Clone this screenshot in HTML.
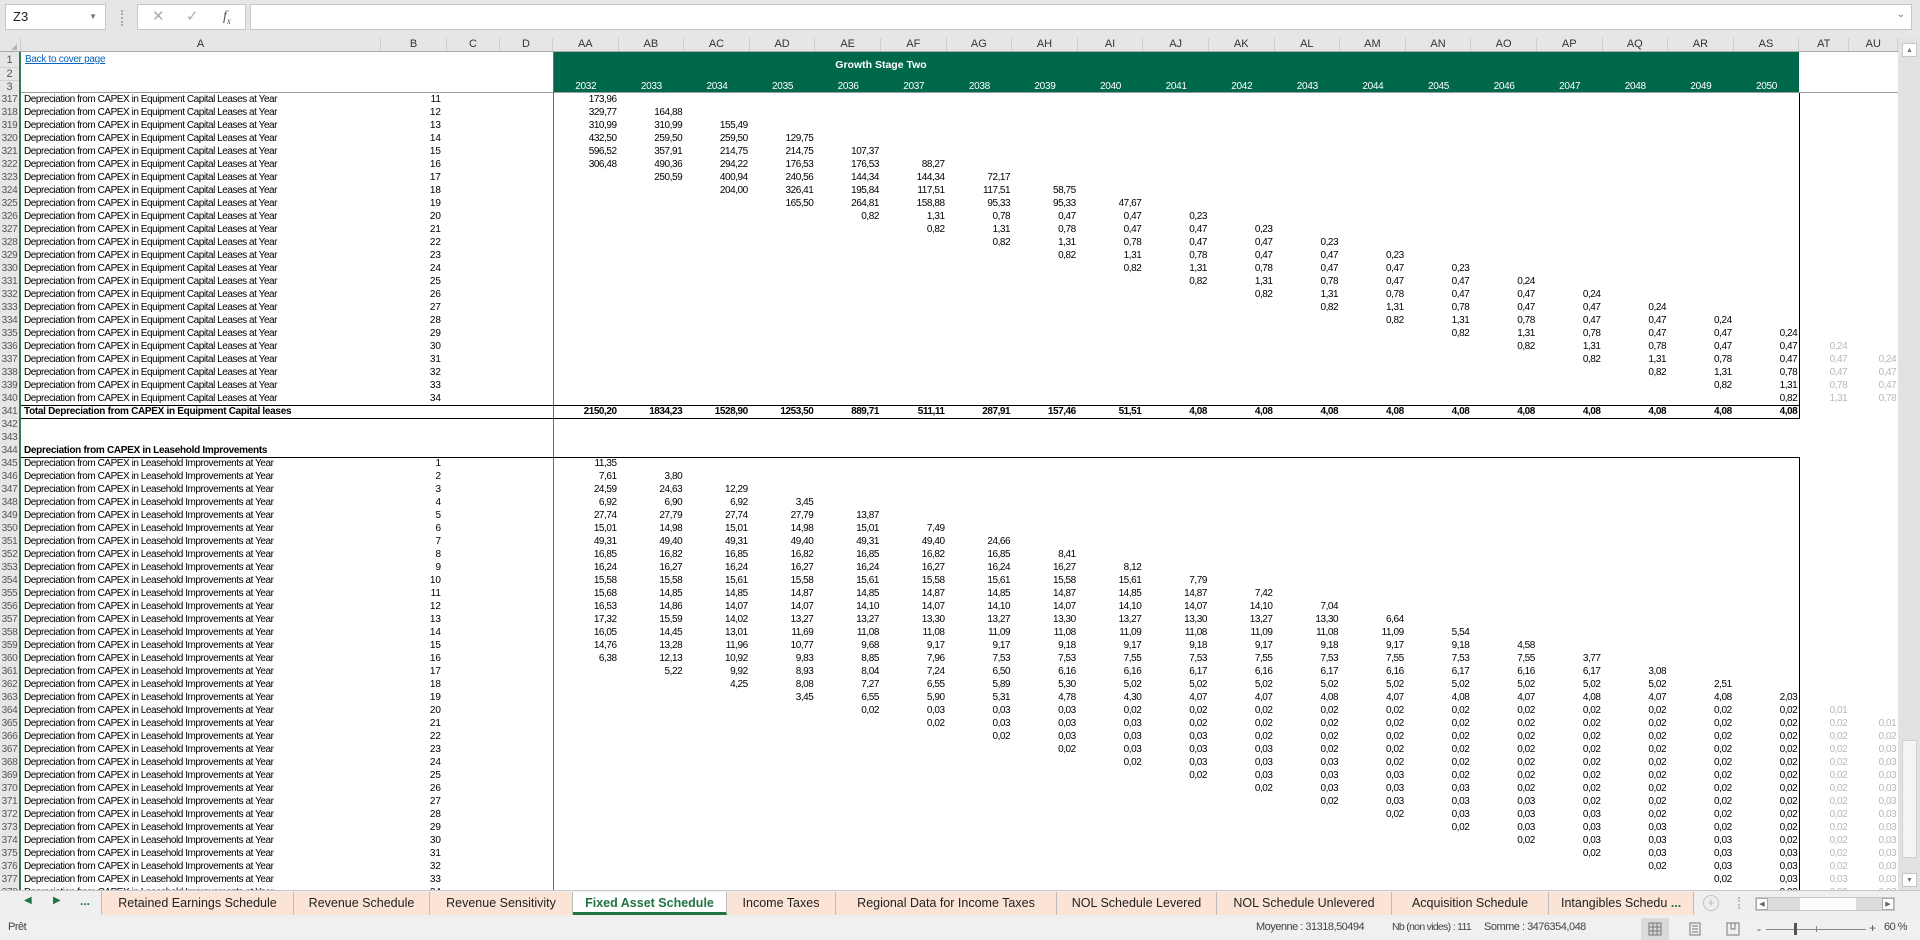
<!DOCTYPE html>
<html><head><meta charset="utf-8"><style>
*{box-sizing:border-box;margin:0;padding:0}
body{width:1920px;height:940px;overflow:hidden;background:#fff;font-family:"Liberation Sans",Arial,sans-serif;position:relative;color:#000}
.abs{position:absolute}
.tb{left:0;top:0;width:1920px;height:38px;background:#e6e6e6}
.box{position:absolute;background:#fff;border:1px solid #c6c6c6}
.g2{display:grid;grid-template-columns:21px 360px 66px 53px 53px repeat(19,65.6px) 50px 49px}
.ch{position:absolute;left:0;top:38px;height:14px;width:1898px;background:#e6e6e6;border-bottom:1px solid #a8a8a8;font-size:11px;color:#333;line-height:13px}
.ch>div{text-align:center;border-right:1px solid #cdcdcd}
#rows{position:absolute;left:0;top:93px;width:1898px}
.r{height:13px;line-height:13px;font-size:10px;white-space:nowrap}
.r>b{background:#e6e6e6;color:#555;text-align:center;font-weight:normal;font-size:10px;letter-spacing:-.3px;border-right:2px solid #2f7a4f;border-bottom:1px solid #d6d6d6;grid-column:1}
.r>a{grid-column:2;padding-left:3px;letter-spacing:-.45px;overflow:visible;color:#000;text-decoration:none}
.r>em{grid-column:3;font-style:normal;text-align:right;padding-right:6px}
.r>span{text-align:right;padding-right:2px;letter-spacing:-.45px}
.r .g{color:#b8b8b8}
.bd{font-weight:bold}
.tab{position:absolute;top:892px;height:23px;line-height:22px;background:#fbe4d6;border-right:1px solid #bdbdbd;font-size:12.5px;color:#222;text-align:center;white-space:nowrap;overflow:hidden}
.st{position:absolute;top:921px;font-size:11px;color:#444;white-space:nowrap;letter-spacing:-.5px}
.g2 i{font-style:normal}
</style></head><body>
<div class="abs tb"></div>
<div class="box" style="left:5px;top:4px;width:101px;height:26px;font-size:13px;line-height:24px;padding-left:7px;color:#222">Z3<span style="position:absolute;right:8px;top:0;font-size:8px;color:#777">▼</span></div>
<div class="abs" style="left:121px;top:10px;width:2px;height:16px;border-left:2px dotted #aaa"></div>
<div class="box" style="left:137px;top:4px;width:109px;height:26px;font-size:15px;line-height:24px;color:#aaa"><span class="abs" style="left:14px">✕</span><span class="abs" style="left:48px">✓</span><span class="abs" style="left:85px;font-family:'Liberation Serif',serif;font-style:italic;color:#555;font-size:14px">f<sub style="font-size:9px">x</sub></span></div>
<div class="box" style="left:250px;top:4px;width:1662px;height:26px"><span class="abs" style="right:6px;top:4px;font-size:10px;color:#666">⌄</span></div>

<div class="ch g2"><div style="position:relative"><span class="abs" style="right:3px;bottom:1px;width:0;height:0;border-left:6px solid transparent;border-bottom:6px solid #b5b5b5"></span></div><div>A</div><div>B</div><div>C</div><div>D</div><div>AA</div><div>AB</div><div>AC</div><div>AD</div><div>AE</div><div>AF</div><div>AG</div><div>AH</div><div>AI</div><div>AJ</div><div>AK</div><div>AL</div><div>AM</div><div>AN</div><div>AO</div><div>AP</div><div>AQ</div><div>AR</div><div>AS</div><div>AT</div><div>AU</div></div>

<div class="abs" style="left:0;top:52px;width:21px;height:41px;background:#e6e6e6;border-right:2px solid #2f7a4f;font-size:11px;color:#555;text-align:center">
<div style="height:16px;line-height:17px;border-bottom:1px solid #d0d0d0">1</div><div style="height:13px;line-height:13px;border-bottom:1px solid #d0d0d0">2</div><div style="height:12px;line-height:12px">3</div></div>
<div class="abs" style="left:25px;top:54px;font-size:10px;color:#0563c1;text-decoration:underline;letter-spacing:-.3px">Back to cover page</div>
<div class="abs" style="left:553px;top:52px;width:1246px;height:41px;background:#00684a"></div>
<div class="abs" style="left:553px;top:59px;width:656px;text-align:center;color:#fff;font-weight:bold;font-size:10.5px">Growth Stage Two</div>
<div class="abs g2" style="left:0;top:81px;width:1898px;color:#fff;font-size:10px;letter-spacing:-.3px;text-align:center"><i style="grid-column:6">2032</i><i>2033</i><i>2034</i><i>2035</i><i>2036</i><i>2037</i><i>2038</i><i>2039</i><i>2040</i><i>2041</i><i>2042</i><i>2043</i><i>2044</i><i>2045</i><i>2046</i><i>2047</i><i>2048</i><i>2049</i><i>2050</i></div>

<div id="rows">
<div class="r g2"><b>317</b><a>Depreciation from CAPEX in Equipment Capital Leases at Year</a><em>11</em><span style="grid-column:6">173,96</span></div>
<div class="r g2"><b>318</b><a>Depreciation from CAPEX in Equipment Capital Leases at Year</a><em>12</em><span style="grid-column:6">329,77</span><span>164,88</span></div>
<div class="r g2"><b>319</b><a>Depreciation from CAPEX in Equipment Capital Leases at Year</a><em>13</em><span style="grid-column:6">310,99</span><span>310,99</span><span>155,49</span></div>
<div class="r g2"><b>320</b><a>Depreciation from CAPEX in Equipment Capital Leases at Year</a><em>14</em><span style="grid-column:6">432,50</span><span>259,50</span><span>259,50</span><span>129,75</span></div>
<div class="r g2"><b>321</b><a>Depreciation from CAPEX in Equipment Capital Leases at Year</a><em>15</em><span style="grid-column:6">596,52</span><span>357,91</span><span>214,75</span><span>214,75</span><span>107,37</span></div>
<div class="r g2"><b>322</b><a>Depreciation from CAPEX in Equipment Capital Leases at Year</a><em>16</em><span style="grid-column:6">306,48</span><span>490,36</span><span>294,22</span><span>176,53</span><span>176,53</span><span>88,27</span></div>
<div class="r g2"><b>323</b><a>Depreciation from CAPEX in Equipment Capital Leases at Year</a><em>17</em><span style="grid-column:7">250,59</span><span>400,94</span><span>240,56</span><span>144,34</span><span>144,34</span><span>72,17</span></div>
<div class="r g2"><b>324</b><a>Depreciation from CAPEX in Equipment Capital Leases at Year</a><em>18</em><span style="grid-column:8">204,00</span><span>326,41</span><span>195,84</span><span>117,51</span><span>117,51</span><span>58,75</span></div>
<div class="r g2"><b>325</b><a>Depreciation from CAPEX in Equipment Capital Leases at Year</a><em>19</em><span style="grid-column:9">165,50</span><span>264,81</span><span>158,88</span><span>95,33</span><span>95,33</span><span>47,67</span></div>
<div class="r g2"><b>326</b><a>Depreciation from CAPEX in Equipment Capital Leases at Year</a><em>20</em><span style="grid-column:10">0,82</span><span>1,31</span><span>0,78</span><span>0,47</span><span>0,47</span><span>0,23</span></div>
<div class="r g2"><b>327</b><a>Depreciation from CAPEX in Equipment Capital Leases at Year</a><em>21</em><span style="grid-column:11">0,82</span><span>1,31</span><span>0,78</span><span>0,47</span><span>0,47</span><span>0,23</span></div>
<div class="r g2"><b>328</b><a>Depreciation from CAPEX in Equipment Capital Leases at Year</a><em>22</em><span style="grid-column:12">0,82</span><span>1,31</span><span>0,78</span><span>0,47</span><span>0,47</span><span>0,23</span></div>
<div class="r g2"><b>329</b><a>Depreciation from CAPEX in Equipment Capital Leases at Year</a><em>23</em><span style="grid-column:13">0,82</span><span>1,31</span><span>0,78</span><span>0,47</span><span>0,47</span><span>0,23</span></div>
<div class="r g2"><b>330</b><a>Depreciation from CAPEX in Equipment Capital Leases at Year</a><em>24</em><span style="grid-column:14">0,82</span><span>1,31</span><span>0,78</span><span>0,47</span><span>0,47</span><span>0,23</span></div>
<div class="r g2"><b>331</b><a>Depreciation from CAPEX in Equipment Capital Leases at Year</a><em>25</em><span style="grid-column:15">0,82</span><span>1,31</span><span>0,78</span><span>0,47</span><span>0,47</span><span>0,24</span></div>
<div class="r g2"><b>332</b><a>Depreciation from CAPEX in Equipment Capital Leases at Year</a><em>26</em><span style="grid-column:16">0,82</span><span>1,31</span><span>0,78</span><span>0,47</span><span>0,47</span><span>0,24</span></div>
<div class="r g2"><b>333</b><a>Depreciation from CAPEX in Equipment Capital Leases at Year</a><em>27</em><span style="grid-column:17">0,82</span><span>1,31</span><span>0,78</span><span>0,47</span><span>0,47</span><span>0,24</span></div>
<div class="r g2"><b>334</b><a>Depreciation from CAPEX in Equipment Capital Leases at Year</a><em>28</em><span style="grid-column:18">0,82</span><span>1,31</span><span>0,78</span><span>0,47</span><span>0,47</span><span>0,24</span></div>
<div class="r g2"><b>335</b><a>Depreciation from CAPEX in Equipment Capital Leases at Year</a><em>29</em><span style="grid-column:19">0,82</span><span>1,31</span><span>0,78</span><span>0,47</span><span>0,47</span><span>0,24</span></div>
<div class="r g2"><b>336</b><a>Depreciation from CAPEX in Equipment Capital Leases at Year</a><em>30</em><span style="grid-column:20">0,82</span><span>1,31</span><span>0,78</span><span>0,47</span><span>0,47</span><span class="g">0,24</span></div>
<div class="r g2"><b>337</b><a>Depreciation from CAPEX in Equipment Capital Leases at Year</a><em>31</em><span style="grid-column:21">0,82</span><span>1,31</span><span>0,78</span><span>0,47</span><span class="g">0,47</span><span class="g">0,24</span></div>
<div class="r g2"><b>338</b><a>Depreciation from CAPEX in Equipment Capital Leases at Year</a><em>32</em><span style="grid-column:22">0,82</span><span>1,31</span><span>0,78</span><span class="g">0,47</span><span class="g">0,47</span></div>
<div class="r g2"><b>339</b><a>Depreciation from CAPEX in Equipment Capital Leases at Year</a><em>33</em><span style="grid-column:23">0,82</span><span>1,31</span><span class="g">0,78</span><span class="g">0,47</span></div>
<div class="r g2"><b>340</b><a>Depreciation from CAPEX in Equipment Capital Leases at Year</a><em>34</em><span style="grid-column:24">0,82</span><span class="g">1,31</span><span class="g">0,78</span></div>
<div class="r g2 bd"><b>341</b><a style="letter-spacing:-.3px">Total Depreciation from CAPEX in Equipment Capital leases</a><span style="grid-column:6">2150,20</span><span>1834,23</span><span>1528,90</span><span>1253,50</span><span>889,71</span><span>511,11</span><span>287,91</span><span>157,46</span><span>51,51</span><span>4,08</span><span>4,08</span><span>4,08</span><span>4,08</span><span>4,08</span><span>4,08</span><span>4,08</span><span>4,08</span><span>4,08</span><span>4,08</span></div>
<div class="r g2"><b>342</b></div>
<div class="r g2"><b>343</b></div>
<div class="r g2 bd"><b>344</b><a style="letter-spacing:-.3px">Depreciation from CAPEX in Leasehold Improvements</a></div>
<div class="r g2"><b>345</b><a>Depreciation from CAPEX in Leasehold Improvements at Year</a><em>1</em><span style="grid-column:6">11,35</span></div>
<div class="r g2"><b>346</b><a>Depreciation from CAPEX in Leasehold Improvements at Year</a><em>2</em><span style="grid-column:6">7,61</span><span>3,80</span></div>
<div class="r g2"><b>347</b><a>Depreciation from CAPEX in Leasehold Improvements at Year</a><em>3</em><span style="grid-column:6">24,59</span><span>24,63</span><span>12,29</span></div>
<div class="r g2"><b>348</b><a>Depreciation from CAPEX in Leasehold Improvements at Year</a><em>4</em><span style="grid-column:6">6,92</span><span>6,90</span><span>6,92</span><span>3,45</span></div>
<div class="r g2"><b>349</b><a>Depreciation from CAPEX in Leasehold Improvements at Year</a><em>5</em><span style="grid-column:6">27,74</span><span>27,79</span><span>27,74</span><span>27,79</span><span>13,87</span></div>
<div class="r g2"><b>350</b><a>Depreciation from CAPEX in Leasehold Improvements at Year</a><em>6</em><span style="grid-column:6">15,01</span><span>14,98</span><span>15,01</span><span>14,98</span><span>15,01</span><span>7,49</span></div>
<div class="r g2"><b>351</b><a>Depreciation from CAPEX in Leasehold Improvements at Year</a><em>7</em><span style="grid-column:6">49,31</span><span>49,40</span><span>49,31</span><span>49,40</span><span>49,31</span><span>49,40</span><span>24,66</span></div>
<div class="r g2"><b>352</b><a>Depreciation from CAPEX in Leasehold Improvements at Year</a><em>8</em><span style="grid-column:6">16,85</span><span>16,82</span><span>16,85</span><span>16,82</span><span>16,85</span><span>16,82</span><span>16,85</span><span>8,41</span></div>
<div class="r g2"><b>353</b><a>Depreciation from CAPEX in Leasehold Improvements at Year</a><em>9</em><span style="grid-column:6">16,24</span><span>16,27</span><span>16,24</span><span>16,27</span><span>16,24</span><span>16,27</span><span>16,24</span><span>16,27</span><span>8,12</span></div>
<div class="r g2"><b>354</b><a>Depreciation from CAPEX in Leasehold Improvements at Year</a><em>10</em><span style="grid-column:6">15,58</span><span>15,58</span><span>15,61</span><span>15,58</span><span>15,61</span><span>15,58</span><span>15,61</span><span>15,58</span><span>15,61</span><span>7,79</span></div>
<div class="r g2"><b>355</b><a>Depreciation from CAPEX in Leasehold Improvements at Year</a><em>11</em><span style="grid-column:6">15,68</span><span>14,85</span><span>14,85</span><span>14,87</span><span>14,85</span><span>14,87</span><span>14,85</span><span>14,87</span><span>14,85</span><span>14,87</span><span>7,42</span></div>
<div class="r g2"><b>356</b><a>Depreciation from CAPEX in Leasehold Improvements at Year</a><em>12</em><span style="grid-column:6">16,53</span><span>14,86</span><span>14,07</span><span>14,07</span><span>14,10</span><span>14,07</span><span>14,10</span><span>14,07</span><span>14,10</span><span>14,07</span><span>14,10</span><span>7,04</span></div>
<div class="r g2"><b>357</b><a>Depreciation from CAPEX in Leasehold Improvements at Year</a><em>13</em><span style="grid-column:6">17,32</span><span>15,59</span><span>14,02</span><span>13,27</span><span>13,27</span><span>13,30</span><span>13,27</span><span>13,30</span><span>13,27</span><span>13,30</span><span>13,27</span><span>13,30</span><span>6,64</span></div>
<div class="r g2"><b>358</b><a>Depreciation from CAPEX in Leasehold Improvements at Year</a><em>14</em><span style="grid-column:6">16,05</span><span>14,45</span><span>13,01</span><span>11,69</span><span>11,08</span><span>11,08</span><span>11,09</span><span>11,08</span><span>11,09</span><span>11,08</span><span>11,09</span><span>11,08</span><span>11,09</span><span>5,54</span></div>
<div class="r g2"><b>359</b><a>Depreciation from CAPEX in Leasehold Improvements at Year</a><em>15</em><span style="grid-column:6">14,76</span><span>13,28</span><span>11,96</span><span>10,77</span><span>9,68</span><span>9,17</span><span>9,17</span><span>9,18</span><span>9,17</span><span>9,18</span><span>9,17</span><span>9,18</span><span>9,17</span><span>9,18</span><span>4,58</span></div>
<div class="r g2"><b>360</b><a>Depreciation from CAPEX in Leasehold Improvements at Year</a><em>16</em><span style="grid-column:6">6,38</span><span>12,13</span><span>10,92</span><span>9,83</span><span>8,85</span><span>7,96</span><span>7,53</span><span>7,53</span><span>7,55</span><span>7,53</span><span>7,55</span><span>7,53</span><span>7,55</span><span>7,53</span><span>7,55</span><span>3,77</span></div>
<div class="r g2"><b>361</b><a>Depreciation from CAPEX in Leasehold Improvements at Year</a><em>17</em><span style="grid-column:7">5,22</span><span>9,92</span><span>8,93</span><span>8,04</span><span>7,24</span><span>6,50</span><span>6,16</span><span>6,16</span><span>6,17</span><span>6,16</span><span>6,17</span><span>6,16</span><span>6,17</span><span>6,16</span><span>6,17</span><span>3,08</span></div>
<div class="r g2"><b>362</b><a>Depreciation from CAPEX in Leasehold Improvements at Year</a><em>18</em><span style="grid-column:8">4,25</span><span>8,08</span><span>7,27</span><span>6,55</span><span>5,89</span><span>5,30</span><span>5,02</span><span>5,02</span><span>5,02</span><span>5,02</span><span>5,02</span><span>5,02</span><span>5,02</span><span>5,02</span><span>5,02</span><span>2,51</span></div>
<div class="r g2"><b>363</b><a>Depreciation from CAPEX in Leasehold Improvements at Year</a><em>19</em><span style="grid-column:9">3,45</span><span>6,55</span><span>5,90</span><span>5,31</span><span>4,78</span><span>4,30</span><span>4,07</span><span>4,07</span><span>4,08</span><span>4,07</span><span>4,08</span><span>4,07</span><span>4,08</span><span>4,07</span><span>4,08</span><span>2,03</span></div>
<div class="r g2"><b>364</b><a>Depreciation from CAPEX in Leasehold Improvements at Year</a><em>20</em><span style="grid-column:10">0,02</span><span>0,03</span><span>0,03</span><span>0,03</span><span>0,02</span><span>0,02</span><span>0,02</span><span>0,02</span><span>0,02</span><span>0,02</span><span>0,02</span><span>0,02</span><span>0,02</span><span>0,02</span><span>0,02</span><span class="g">0,01</span></div>
<div class="r g2"><b>365</b><a>Depreciation from CAPEX in Leasehold Improvements at Year</a><em>21</em><span style="grid-column:11">0,02</span><span>0,03</span><span>0,03</span><span>0,03</span><span>0,02</span><span>0,02</span><span>0,02</span><span>0,02</span><span>0,02</span><span>0,02</span><span>0,02</span><span>0,02</span><span>0,02</span><span>0,02</span><span class="g">0,02</span><span class="g">0,01</span></div>
<div class="r g2"><b>366</b><a>Depreciation from CAPEX in Leasehold Improvements at Year</a><em>22</em><span style="grid-column:12">0,02</span><span>0,03</span><span>0,03</span><span>0,03</span><span>0,02</span><span>0,02</span><span>0,02</span><span>0,02</span><span>0,02</span><span>0,02</span><span>0,02</span><span>0,02</span><span>0,02</span><span class="g">0,02</span><span class="g">0,02</span></div>
<div class="r g2"><b>367</b><a>Depreciation from CAPEX in Leasehold Improvements at Year</a><em>23</em><span style="grid-column:13">0,02</span><span>0,03</span><span>0,03</span><span>0,03</span><span>0,02</span><span>0,02</span><span>0,02</span><span>0,02</span><span>0,02</span><span>0,02</span><span>0,02</span><span>0,02</span><span class="g">0,02</span><span class="g">0,03</span></div>
<div class="r g2"><b>368</b><a>Depreciation from CAPEX in Leasehold Improvements at Year</a><em>24</em><span style="grid-column:14">0,02</span><span>0,03</span><span>0,03</span><span>0,03</span><span>0,02</span><span>0,02</span><span>0,02</span><span>0,02</span><span>0,02</span><span>0,02</span><span>0,02</span><span class="g">0,02</span><span class="g">0,03</span></div>
<div class="r g2"><b>369</b><a>Depreciation from CAPEX in Leasehold Improvements at Year</a><em>25</em><span style="grid-column:15">0,02</span><span>0,03</span><span>0,03</span><span>0,03</span><span>0,02</span><span>0,02</span><span>0,02</span><span>0,02</span><span>0,02</span><span>0,02</span><span class="g">0,02</span><span class="g">0,03</span></div>
<div class="r g2"><b>370</b><a>Depreciation from CAPEX in Leasehold Improvements at Year</a><em>26</em><span style="grid-column:16">0,02</span><span>0,03</span><span>0,03</span><span>0,03</span><span>0,02</span><span>0,02</span><span>0,02</span><span>0,02</span><span>0,02</span><span class="g">0,02</span><span class="g">0,03</span></div>
<div class="r g2"><b>371</b><a>Depreciation from CAPEX in Leasehold Improvements at Year</a><em>27</em><span style="grid-column:17">0,02</span><span>0,03</span><span>0,03</span><span>0,03</span><span>0,02</span><span>0,02</span><span>0,02</span><span>0,02</span><span class="g">0,02</span><span class="g">0,03</span></div>
<div class="r g2"><b>372</b><a>Depreciation from CAPEX in Leasehold Improvements at Year</a><em>28</em><span style="grid-column:18">0,02</span><span>0,03</span><span>0,03</span><span>0,03</span><span>0,02</span><span>0,02</span><span>0,02</span><span class="g">0,02</span><span class="g">0,03</span></div>
<div class="r g2"><b>373</b><a>Depreciation from CAPEX in Leasehold Improvements at Year</a><em>29</em><span style="grid-column:19">0,02</span><span>0,03</span><span>0,03</span><span>0,03</span><span>0,02</span><span>0,02</span><span class="g">0,02</span><span class="g">0,03</span></div>
<div class="r g2"><b>374</b><a>Depreciation from CAPEX in Leasehold Improvements at Year</a><em>30</em><span style="grid-column:20">0,02</span><span>0,03</span><span>0,03</span><span>0,03</span><span>0,02</span><span class="g">0,02</span><span class="g">0,03</span></div>
<div class="r g2"><b>375</b><a>Depreciation from CAPEX in Leasehold Improvements at Year</a><em>31</em><span style="grid-column:21">0,02</span><span>0,03</span><span>0,03</span><span>0,03</span><span class="g">0,02</span><span class="g">0,03</span></div>
<div class="r g2"><b>376</b><a>Depreciation from CAPEX in Leasehold Improvements at Year</a><em>32</em><span style="grid-column:22">0,02</span><span>0,03</span><span>0,03</span><span class="g">0,02</span><span class="g">0,03</span></div>
<div class="r g2"><b>377</b><a>Depreciation from CAPEX in Leasehold Improvements at Year</a><em>33</em><span style="grid-column:23">0,02</span><span>0,03</span><span class="g">0,03</span><span class="g">0,03</span></div>
<div class="r g2"><b>378</b><a>Depreciation from CAPEX in Leasehold Improvements at Year</a><em>34</em><span style="grid-column:24">0,02</span><span class="g">0,03</span><span class="g">0,03</span></div>
</div>

<div class="abs" style="left:21px;top:92px;width:1877px;height:1px;background:#9e9e9e"></div>
<div class="abs" style="left:553px;top:52px;width:1px;height:838px;background:#3d8a5c"></div>
<div class="abs" style="left:21px;top:405px;width:1779px;height:1px;background:#000"></div>
<div class="abs" style="left:21px;top:418px;width:1779px;height:1px;background:#000"></div>
<div class="abs" style="left:21px;top:457px;width:1779px;height:1px;background:#000"></div>
<div class="abs" style="left:1799px;top:93px;width:1px;height:326px;background:#000"></div>
<div class="abs" style="left:1799px;top:457px;width:1px;height:433px;background:#000"></div>

<div class="abs" style="left:1898px;top:38px;width:22px;height:852px;background:#e2e2e2"></div>
<div class="box" style="left:1902px;top:43px;width:15px;height:14px;font-size:7px;color:#777;text-align:center;line-height:13px">▲</div>
<div class="abs" style="left:1902px;top:740px;width:15px;height:118px;background:#f4f4f4;border:1px solid #d0d0d0"></div>
<div class="box" style="left:1902px;top:873px;width:15px;height:14px;font-size:7px;color:#777;text-align:center;line-height:13px">▼</div>

<div class="abs" style="left:0;top:890px;width:1920px;height:27px;background:#efefef;border-top:1px solid #c6c6c6"></div>
<div class="abs" style="left:24px;top:895px;font-size:10px;color:#217346">◀</div>
<div class="abs" style="left:53px;top:895px;font-size:10px;color:#217346">▶</div>
<div class="abs" style="left:80px;top:894px;font-size:12px;color:#217346;font-weight:bold">...</div>
<div class="tab" style="left:101px;width:193px;border-left:1px solid #bdbdbd">Retained Earnings Schedule</div>
<div class="tab" style="left:294px;width:136px">Revenue Schedule</div>
<div class="tab" style="left:430px;width:143px">Revenue Sensitivity</div>
<div class="tab" style="left:573px;width:154px;background:#fff;color:#217346;font-weight:bold;border-bottom:3px solid #217346">Fixed Asset Schedule</div>
<div class="tab" style="left:727px;width:109px">Income Taxes</div>
<div class="tab" style="left:836px;width:221px">Regional Data for Income Taxes</div>
<div class="tab" style="left:1057px;width:160px">NOL Schedule Levered</div>
<div class="tab" style="left:1217px;width:175px">NOL Schedule Unlevered</div>
<div class="tab" style="left:1392px;width:157px">Acquisition Schedule</div>
<div class="tab" style="left:1549px;width:145px;text-align:left;padding-left:12px">Intangibles Schedu <b style="color:#217346">...</b></div>
<div class="abs" style="left:1703px;top:895px;width:16px;height:16px;border:1px solid #c0c0c0;border-radius:50%;font-size:13px;line-height:13px;text-align:center;color:#bbb">+</div>
<div class="abs" style="left:1738px;top:897px;height:12px;border-left:2px dotted #bbb"></div>
<div class="abs" style="left:1755px;top:897px;width:140px;height:14px;background:#dcdcdc;border:1px solid #c6c6c6"></div>
<div class="box" style="left:1756px;top:898px;width:12px;height:12px;font-size:7px;color:#666;text-align:center;line-height:11px;border-color:#aaa">◀</div>
<div class="abs" style="left:1800px;top:898px;width:56px;height:12px;background:#fff"></div>
<div class="box" style="left:1882px;top:898px;width:12px;height:12px;font-size:7px;color:#666;text-align:center;line-height:11px;border-color:#aaa">▶</div>

<div class="abs" style="left:0;top:917px;width:1920px;height:23px;background:#f0f0f0"></div>
<div class="st" style="left:8px">Prêt</div>
<div class="st" style="left:1256px">Moyenne : 31318,50494</div>
<div class="st" style="left:1392px;font-size:10.5px;letter-spacing:-.7px">Nb (non vides) : 111</div>
<div class="st" style="left:1484px">Somme : 3476354,048</div>
<div class="abs" style="left:1641px;top:918px;width:28px;height:22px;background:#dadada"></div>
<svg class="abs" style="left:1648px;top:922px" width="14" height="14" viewBox="0 0 14 14" fill="none" stroke="#777"><rect x="1" y="1" width="12" height="12"/><path d="M1 5h12M1 9h12M5 1v12M9 1v12"/></svg>
<svg class="abs" style="left:1688px;top:922px" width="14" height="14" viewBox="0 0 14 14" fill="none" stroke="#777"><rect x="2" y="1" width="10" height="12"/><path d="M4 4h6M4 7h6M4 10h6"/></svg>
<svg class="abs" style="left:1726px;top:922px" width="14" height="14" viewBox="0 0 14 14" fill="none" stroke="#777"><path d="M1 1h12v12H1zM5 1v6h4V1"/></svg>
<div class="abs" style="left:1757px;top:924px;font-size:12px;color:#555;line-height:10px">-</div>
<div class="abs" style="left:1766px;top:929px;width:100px;height:1px;background:#888"></div>
<div class="abs" style="left:1794px;top:923px;width:3px;height:12px;background:#555"></div>
<div class="abs" style="left:1816px;top:926px;width:1px;height:6px;background:#888"></div>
<div class="abs" style="left:1869px;top:921px;font-size:12px;color:#555">+</div>
<div class="st" style="left:1884px">60 %</div>
</body></html>
